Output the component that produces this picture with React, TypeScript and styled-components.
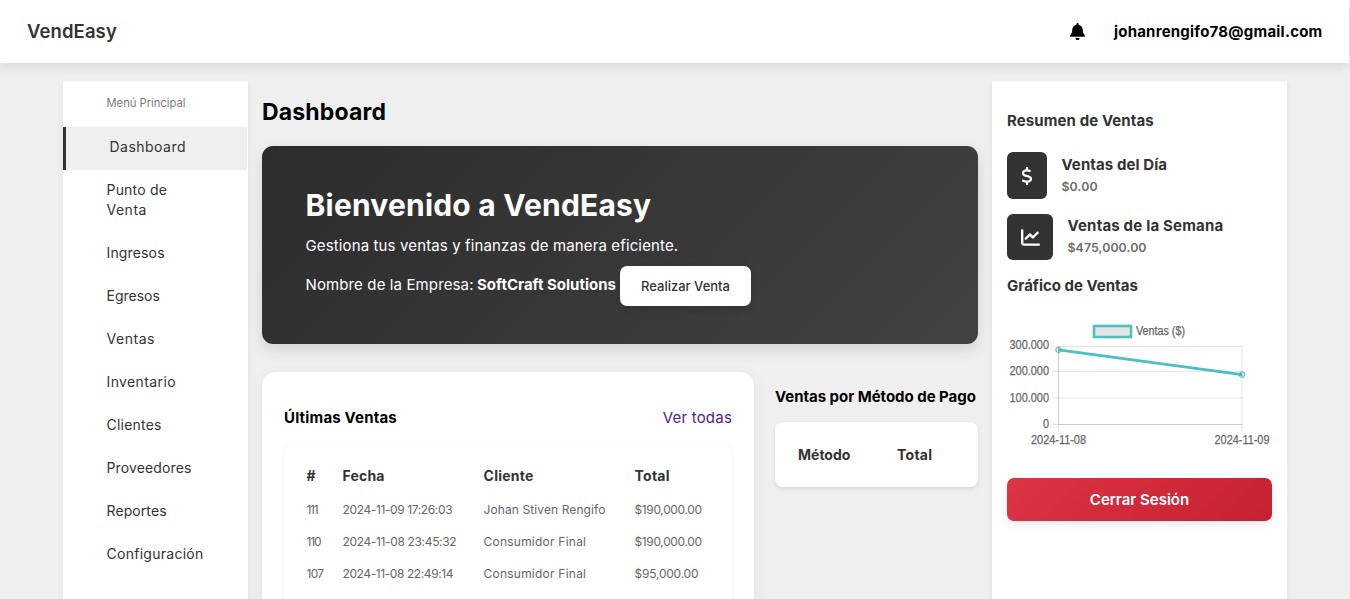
import React from 'react';
import styled, { createGlobalStyle, css } from 'styled-components';
import { FaBell, FaChartLine, FaDollarSign } from 'react-icons/fa6';

const GlobalStyle = createGlobalStyle`
  * { box-sizing: border-box; }
  html, body { margin: 0; height: 100%; overflow: hidden; }
  body {
    background: #efefef;
    color: #000;
    font-family: Inter, "Open Sans", sans-serif;
    font-size: 15px;
  }
  h1, h2, h3, p { margin: 0; }
`;

type Tracked = { $track?: number };
const tracking = css<Tracked>`
  letter-spacing: ${(p) => p.$track ?? 0}px;
  white-space: nowrap;
`;

const Page = styled.div`
  height: 599px;
  overflow: hidden;
`;

const Header = styled.header`
  position: relative;
  display: flex;
  align-items: center;
  justify-content: space-between;
  height: 63px;
  margin-right: 1px;
  padding: 0 26.5px 1px 27px;
  background: #fff;
  box-shadow: 0 3px 11px rgba(0, 0, 0, 0.11);
`;

const Brand = styled.div<Tracked>`
  color: #333;
  font-size: 18.5px;
  font-weight: 600;
  ${tracking}
`;

const Account = styled.div`
  display: flex;
  align-items: center;
  gap: 28px;
  font-weight: 700;
`;

const Email = styled.span<Tracked>`
  ${tracking}
`;

const Layout = styled.div`
  display: grid;
  grid-template-columns: 185px 716px 295px;
  gap: 14px;
  width: 1224px;
  height: 536px;
  margin-left: 63px;
  padding-top: 18px;
`;

const Sidebar = styled.nav`
  background: #fff;
  padding: 12px 1px 0 0;
  box-shadow: 0 2px 6px rgba(0, 0, 0, 0.07);
`;

const MenuTitle = styled.div<Tracked>`
  height: 34px;
  padding-left: 43.5px;
  color: #7b7b7b;
  font-size: 11.2px;
  line-height: 21px;
  ${tracking}
`;

const MenuItem = styled.a<{ $active?: boolean }>`
  display: flex;
  flex-direction: column;
  padding: 10px 0 13px 43.5px;
  color: #333;
  font-size: 14px;
  line-height: 20px;
  ${(p) => p.$active && 'background: #efefef; border-left: 3px solid #333;'}
`;

const MenuLine = styled.span<Tracked>`
  ${tracking}
`;

const Main = styled.main`
  display: flex;
  flex-direction: column;
  min-width: 0;
`;

const PageTitle = styled.h1<Tracked>`
  height: 65px;
  font-size: 23px;
  font-weight: 700;
  line-height: 62px;
  ${tracking}
`;

const Banner = styled.section`
  height: 198px;
  flex: none;
  padding: 37px 43.5px 0;
  border-radius: 11px;
  background: linear-gradient(135deg, #2c2c2c, #424242);
  box-shadow: 0 6px 15px rgba(0, 0, 0, 0.12);
  color: #fff;
`;

const BannerTitle = styled.h2<Tracked>`
  font-size: 30px;
  font-weight: 700;
  line-height: 44px;
  ${tracking}
`;

const BannerText = styled.p<Tracked>`
  padding-top: 7px;
  line-height: 24px;
  ${tracking}
`;

const CompanyRow = styled.div`
  display: flex;
  align-items: center;
  padding-top: 8px;
`;

const CompanyLabel = styled.span<Tracked>`
  width: 171.5px;
  line-height: 38px;
  padding-bottom: 2px;
  ${tracking}
`;

const CompanyName = styled.strong<Tracked>`
  width: 143px;
  padding-bottom: 3px;
  ${tracking}
`;

const SaleButton = styled.button<Tracked>`
  width: 131px;
  height: 40px;
  padding: 0;
  border: 0;
  border-radius: 7px;
  background: #fff;
  color: #333;
  font: 500 13px Inter, sans-serif;
  box-shadow: 0 3px 7px rgba(0, 0, 0, 0.12);
  ${tracking}
`;

const Sections = styled.div`
  display: grid;
  grid-template-columns: 492px 203px;
  gap: 21px;
  flex: 1;
  padding-top: 28px;
`;

const SalesCard = styled.section`
  height: 300px;
  padding: 30px 22px 0;
  border-radius: 14px;
  background: #fff;
  box-shadow: 0 4px 15px rgba(0, 0, 0, 0.06);
`;

const CardHeader = styled.div`
  display: flex;
  align-items: center;
  justify-content: space-between;
  height: 30px;
`;

const SectionTitle = styled.h3<Tracked>`
  font-size: 15px;
  font-weight: 700;
  ${tracking}
`;

const AllLink = styled.a<Tracked>`
  color: #551a8b;
  ${tracking}
`;

const SalesTable = styled.div`
  height: 260px;
  margin-top: 12px;
  padding: 13px 22.5px 0;
  border-radius: 11px;
  box-shadow: 0 1px 5px rgba(0, 0, 0, 0.06);
`;

const SalesRow = styled.div<{ $head?: boolean }>`
  display: grid;
  grid-template-columns: 36px 141px 151px 1fr;
  align-items: center;
  height: ${(p) => (p.$head ? 36 : 32)}px;
`;

const HeadCell = styled.span<Tracked>`
  color: #333;
  font-size: 14px;
  font-weight: 700;
  ${tracking}
`;

const Cell = styled.span<Tracked>`
  color: #666;
  font-size: 12px;
  ${tracking}
`;

const PaymentSection = styled.section`
  padding-top: 10px;
`;

const PaymentTitle = styled(SectionTitle)`
  line-height: 30px;
`;

const PaymentTable = styled.div`
  display: grid;
  grid-template-columns: 99px 1fr;
  align-items: center;
  height: 65px;
  margin-top: 10px;
  padding-left: 23px;
  border-radius: 8px;
  background: #fff;
  box-shadow: 0 2px 5px rgba(0, 0, 0, 0.09);
`;

const Summary = styled.aside`
  padding: 24px 15px 0;
  background: #fff;
  color: #333;
  box-shadow: 0 2px 6px rgba(0, 0, 0, 0.07);
`;

const SummaryTitle = styled(SectionTitle)`
  height: 30px;
  line-height: 31px;
`;

const Stats = styled.div`
  display: flex;
  flex-direction: column;
  gap: 15px;
  padding: 17px 0 10px;
`;

const Stat = styled.div`
  display: flex;
  align-items: center;
  gap: 14.5px;
`;

const StatIcon = styled.div<{ $w: number; $h: number }>`
  display: flex;
  align-items: center;
  justify-content: center;
  width: ${(p) => p.$w}px;
  height: ${(p) => p.$h}px;
  border-radius: 6px;
  background: #333;
  color: #fff;
`;

const StatText = styled.div`
  line-height: 22px;
`;

const StatValue = styled.div<Tracked>`
  color: #6b6b6b;
  font-size: 12.3px;
  font-weight: 600;
  ${tracking}
`;

const Chart = styled.svg`
  display: block;
  width: 265px;
  height: 140px;
  margin-top: 17px;
  overflow: visible;
  font-family: "Liberation Sans", Arial, sans-serif;
  font-size: 12px;
  fill: #666;
`;

const ChartLabel = styled.text`
  stroke: #666;
  stroke-width: 0.25px;
`;

const LogoutButton = styled.button<Tracked>`
  display: block;
  width: 265px;
  height: 43px;
  margin-top: 21px;
  border: 0;
  border-radius: 7px;
  background: linear-gradient(135deg, #dc3545, #c62130);
  color: #fff;
  font: 600 15px Inter, sans-serif;
  box-shadow: 0 3px 8px rgba(0, 0, 0, 0.1);
  ${tracking}
`;

const menu: { lines: [string, number][]; active?: boolean }[] = [
  { lines: [['Dashboard', 0.48]], active: true },
  { lines: [['Punto de', 0.2], ['Venta', 0.5]] },
  { lines: [['Ingresos', 0.15]] },
  { lines: [['Egresos', 0]] },
  { lines: [['Ventas', 0.54]] },
  { lines: [['Inventario', 0.38]] },
  { lines: [['Clientes', 0.22]] },
  { lines: [['Proveedores', 0.14]] },
  { lines: [['Reportes', 0.09]] },
  { lines: [['Configuración', 0.27]] },
];

const sales: [string, number][][] = [
  [['111', -1.3], ['2024-11-09 17:26:03', -0.38], ['Johan Stiven Rengifo', 0.1], ['$190,000.00', -0.36]],
  [['110', -1.1], ['2024-11-08 23:45:32', -0.35], ['Consumidor Final', 0.23], ['$190,000.00', -0.36]],
  [['107', -0.7], ['2024-11-08 22:49:14', -0.41], ['Consumidor Final', 0.23], ['$95,000.00', -0.22]],
];

const chartLabels: { text: string; x: number; y: number; width: number }[] = [
  { text: 'Ventas ($)', x: 129, y: 17.5, width: 49 },
  { text: '300.000', x: 2.5, y: 32.3, width: 39.5 },
  { text: '200.000', x: 2.5, y: 58.3, width: 39.5 },
  { text: '100.000', x: 2.5, y: 84.5, width: 39.5 },
  { text: '0', x: 36, y: 110.5, width: 6 },
  { text: '2024-11-08', x: 24, y: 127, width: 55 },
  { text: '2024-11-09', x: 207.5, y: 127, width: 55 },
];

function SalesChart() {
  return (
    <Chart viewBox="0 0 265 140">
      <g fill="none" stroke="rgba(0,0,0,0.1)">
        <path d="M45 29.5H235.5M45 54.5H235.5M45 81H235.5M45 107.5H235.5" />
        <path d="M51.5 29.5V114.5M235 29.5V114.5" />
        <path d="M51.5 29.5V107.5H235" />
      </g>
      <rect x="87" y="9" width="37" height="11" fill="#e5e5e5" stroke="#4bc0c0" strokeWidth="2.6" />
      {chartLabels.map((label) => (
        <ChartLabel key={label.text} x={label.x} y={label.y} textLength={label.width} lengthAdjust="spacingAndGlyphs">
          {label.text}
        </ChartLabel>
      ))}
      <path d="M51.5 32.8L235 57.6" fill="none" stroke="#4bc0c0" strokeWidth="2.8" />
      <g fill="rgba(0,0,0,0.1)" stroke="#4bc0c0">
        <circle cx="51.5" cy="32.8" r="2.8" />
        <circle cx="235" cy="57.6" r="2.8" />
      </g>
    </Chart>
  );
}

export default function App() {
  return (
    <Page>
      <GlobalStyle />
      <Header>
        <Brand $track={0.1}>VendEasy</Brand>
        <Account>
          <FaBell size={17} />
          <Email $track={0.22}>johanrengifo78@gmail.com</Email>
        </Account>
      </Header>
      <Layout>
        <Sidebar>
          <MenuTitle>Menú Principal</MenuTitle>
          {menu.map((item) => (
            <MenuItem key={item.lines[0][0]} $active={item.active}>
              {item.lines.map(([text, track]) => (
                <MenuLine key={text} $track={track}>{text}</MenuLine>
              ))}
            </MenuItem>
          ))}
        </Sidebar>
        <Main>
          <PageTitle $track={0.17}>Dashboard</PageTitle>
          <Banner>
            <BannerTitle $track={0.2}>Bienvenido a VendEasy</BannerTitle>
            <BannerText $track={0.13}>Gestiona tus ventas y finanzas de manera eficiente.</BannerText>
            <CompanyRow>
              <CompanyLabel $track={0.12}>Nombre de la Empresa:</CompanyLabel>
              <CompanyName>SoftCraft Solutions</CompanyName>
              <SaleButton>Realizar Venta</SaleButton>
            </CompanyRow>
          </Banner>
          <Sections>
            <SalesCard>
              <CardHeader>
                <SectionTitle $track={0.18}>Últimas Ventas</SectionTitle>
                <AllLink $track={0.2}>Ver todas</AllLink>
              </CardHeader>
              <SalesTable>
                <SalesRow $head>
                  <HeadCell>#</HeadCell>
                  <HeadCell $track={0.18}>Fecha</HeadCell>
                  <HeadCell $track={0.27}>Cliente</HeadCell>
                  <HeadCell $track={0.27}>Total</HeadCell>
                </SalesRow>
                {sales.map((row) => (
                  <SalesRow key={row[0][0]}>
                    {row.map(([text, track]) => (
                      <Cell key={text} $track={track}>{text}</Cell>
                    ))}
                  </SalesRow>
                ))}
              </SalesTable>
            </SalesCard>
            <PaymentSection>
              <PaymentTitle $track={-0.03}>Ventas por Método de Pago</PaymentTitle>
              <PaymentTable>
                <HeadCell>Método</HeadCell>
                <HeadCell $track={0.27}>Total</HeadCell>
              </PaymentTable>
            </PaymentSection>
          </Sections>
        </Main>
        <Summary>
          <SummaryTitle $track={0.1}>Resumen de Ventas</SummaryTitle>
          <Stats>
            <Stat>
              <StatIcon $w={40} $h={47}><FaDollarSign size={18} /></StatIcon>
              <StatText>
                <SectionTitle $track={0.09}>Ventas del Día</SectionTitle>
                <StatValue $track={0.11}>$0.00</StatValue>
              </StatText>
            </Stat>
            <Stat>
              <StatIcon $w={46} $h={46}><FaChartLine size={19} /></StatIcon>
              <StatText>
                <SectionTitle $track={0.19}>Ventas de la Semana</SectionTitle>
                <StatValue $track={0.1}>$475,000.00</StatValue>
              </StatText>
            </Stat>
          </Stats>
          <SummaryTitle>Gráfico de Ventas</SummaryTitle>
          <SalesChart />
          <LogoutButton>Cerrar Sesión</LogoutButton>
        </Summary>
      </Layout>
    </Page>
  );
}
